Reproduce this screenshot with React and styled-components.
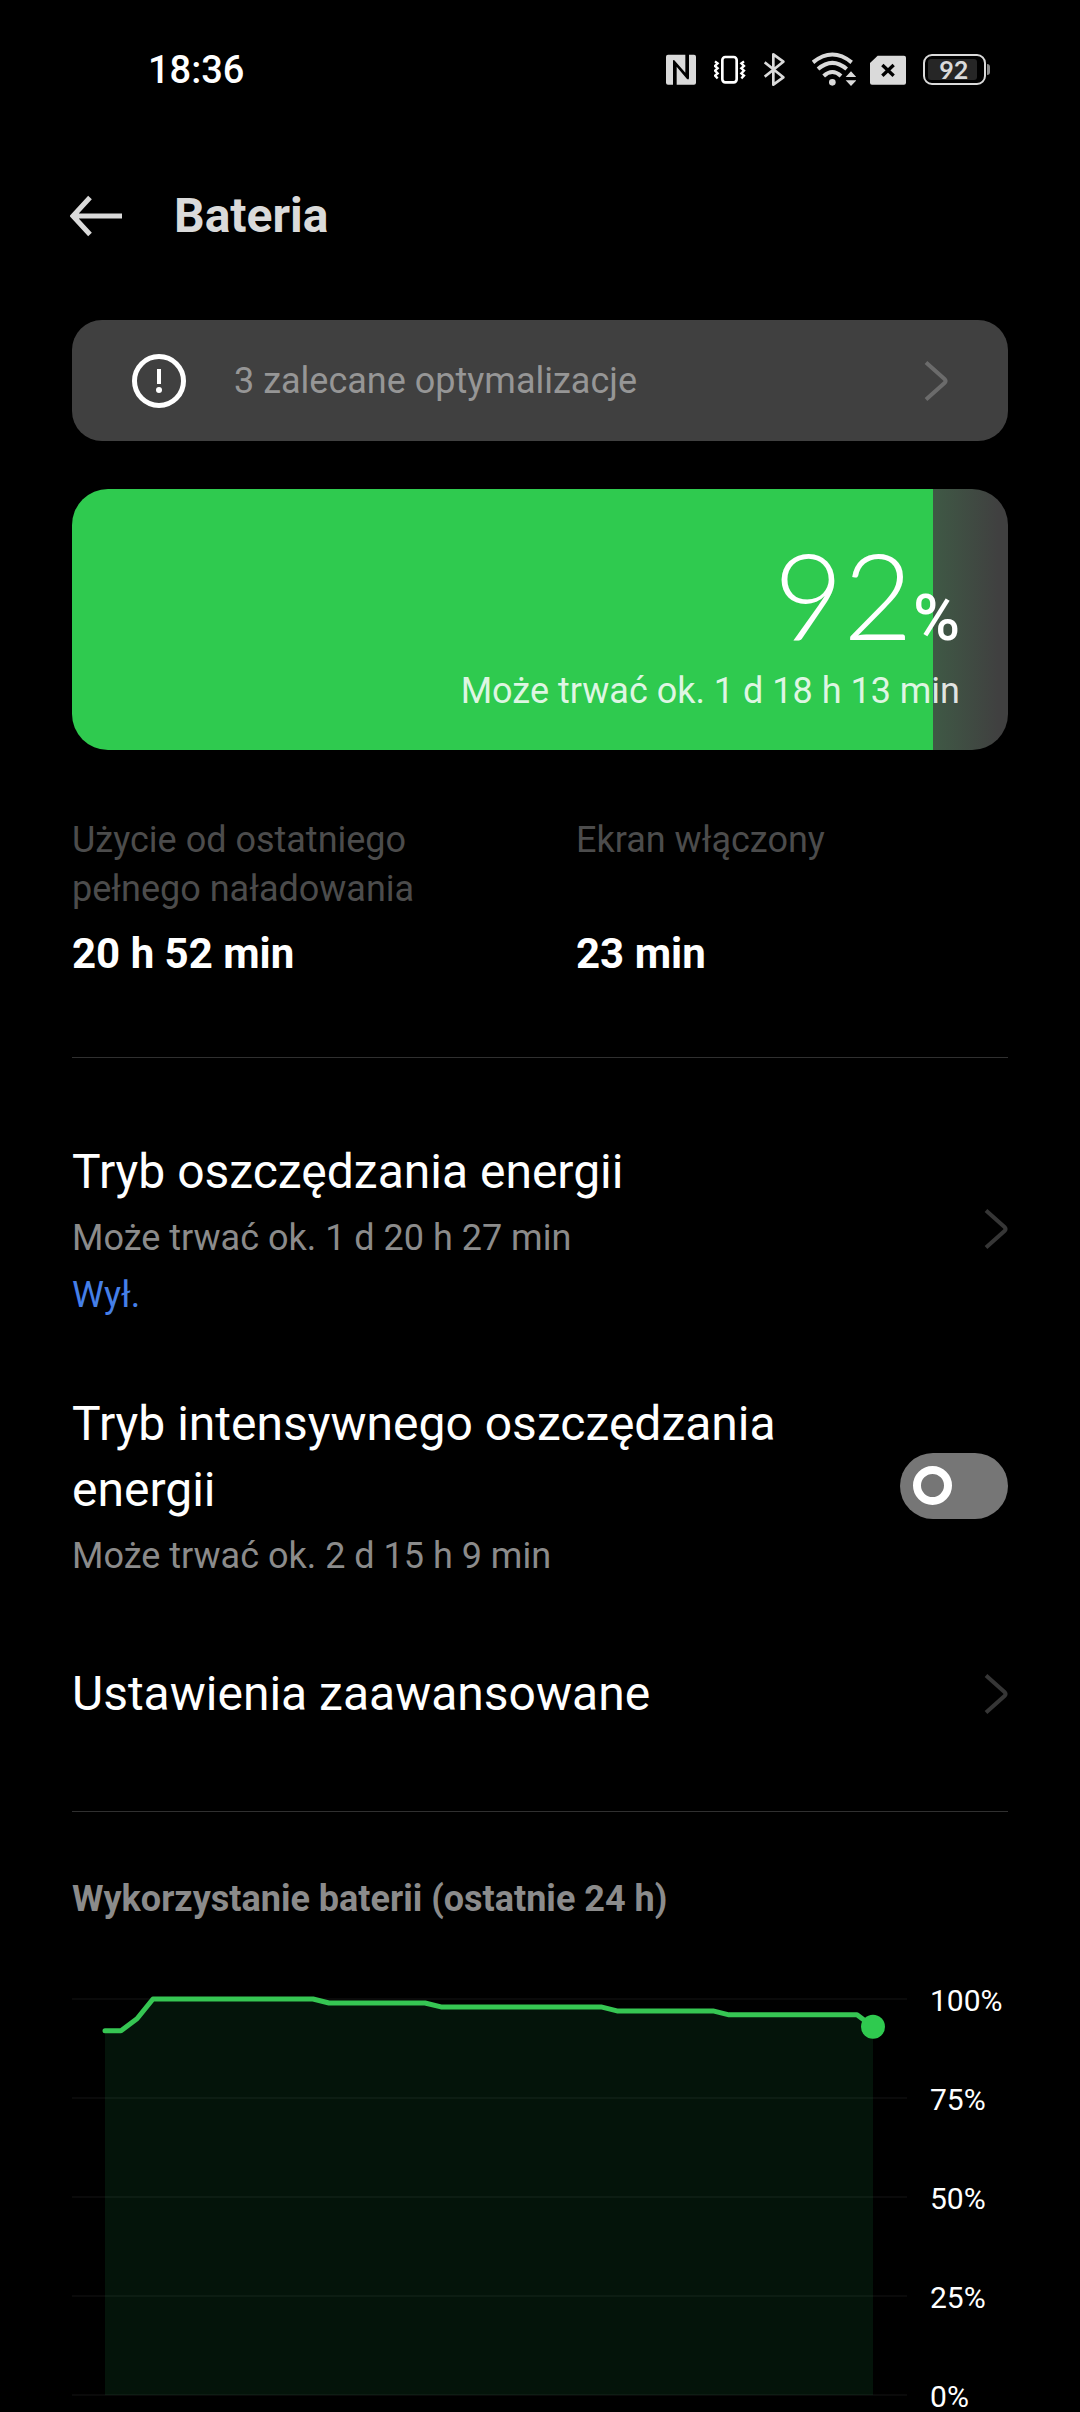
import React, { useState } from 'react'
import styled, { createGlobalStyle } from 'styled-components'

const colors = {
  black: '#000000',
  white: '#ffffff',
  light: '#dadada',
  grey: '#8b8b8b',
  dim: '#4c4c4c',
  card: '#404040',
  green: '#2fca4f',
  blue: '#457fe8',
}

const level = 92

// battery level every half hour, oldest first
const history = [
  92, 92, 95,
  ...Array(11).fill(100),
  ...Array(7).fill(99),
  ...Array(11).fill(98),
  ...Array(7).fill(97),
  ...Array(9).fill(96),
  93,
]

const scale = [100, 75, 50, 25, 0]

const Chevron = () => (
  <ChevronIcon viewBox="0 0 24 42" aria-hidden="true">
    <path d="M2 2.5 L20.5 19 Q22.5 21 20.5 23 L2 39.5" />
  </ChevronIcon>
)

const StatusIcons = () => (
  <Icons>
    <svg width="34" height="40" viewBox="78 58 102 120" aria-label="NFC">
      <path fill={colors.light} d="M84 72 H136 V126 L103 89 Q99 86 99 92 V162 H84 Q78 162 78 156 V78 Q78 72 84 72Z M147 72 H162 Q168 72 168 78 V156 Q168 162 162 162 H110 V108 L141 145 Q147 149 147 141Z" />
    </svg>
    <svg width="36" height="40" viewBox="222 58 108 120" aria-label="Wibracje">
      <rect x="247" y="79" width="43" height="76" rx="9" fill="none" stroke={colors.white} strokeWidth="8" />
      <path
        fill="none"
        stroke={colors.white}
        strokeWidth="7"
        d="M225 92 L233 98 L225 106 L233 113 L225 120 L233 128 L225 135 L233 143 M312 92 L304 98 L312 106 L304 113 L312 120 L304 128 L312 135 L304 143"
      />
    </svg>
    <svg width="34" height="40" viewBox="372 58 102 120" aria-label="Bluetooth">
      <path fill="none" stroke={colors.light} strokeWidth="8" strokeLinejoin="round" d="M374 95 L430 140 L400 162 V71 L430 93 L374 138" />
    </svg>
    <svg width="44" height="40" viewBox="516 58 132 120" aria-label="Wi-Fi">
      <g fill="none" stroke={colors.light} strokeWidth="12">
        <path d="M519 95 Q577 48 635 95" />
        <path d="M534 115 Q577 78 620 115" />
        <path d="M551 136 Q577 112 603 136" />
      </g>
      <circle cx="577" cy="155" r="10" fill={colors.light} />
      <path fill={colors.light} d="M617 139 L633 122 L649 139Z M617 149 L633 166 L649 149Z" />
    </svg>
    <svg width="39" height="40" viewBox="690 58 117 120" aria-label="Brak karty SIM">
      <path fill={colors.light} d="M713 75 H792 Q798 75 798 81 V156 Q798 162 792 162 H696 Q690 162 690 156 V97Z" />
      <path stroke={colors.black} strokeWidth="10" d="M727 103 L761 135 M761 103 L727 135" />
    </svg>
    <Battery>
      <BatteryBody>
        <BatteryLevel>{level}</BatteryLevel>
      </BatteryBody>
      <BatteryTip />
    </Battery>
  </Icons>
)

const Chart = () => {
  const top = 13
  const bottom = 409
  const left = 33
  const step = 16
  const y = value => bottom - (value / 100) * (bottom - top)
  const points = history.map((value, i) => `${left + i * step},${y(value)}`).join(' ')
  const right = left + (history.length - 1) * step

  return (
    <ChartRow>
      <Plot viewBox="0 0 836 426" role="img" aria-label="Poziom baterii">
        <polygon points={`${left},${bottom} ${points} ${right},${bottom}`} fill="#04140a" />
        {scale.map(value => (
          <line key={value} x1="0" x2="835" y1={y(value)} y2={y(value)} stroke={colors.white} strokeOpacity="0.04" strokeWidth="2" />
        ))}
        <polyline points={points} fill="none" stroke="#36c653" strokeWidth="5" strokeLinecap="round" strokeLinejoin="round" />
        <circle cx={right} cy={y(history[history.length - 1])} r="12" fill={colors.green} />
      </Plot>
      <Scale>
        {scale.map(value => (
          <span key={value}>{value}%</span>
        ))}
      </Scale>
    </ChartRow>
  )
}

const App = () => {
  const [intense, setIntense] = useState(false)

  return (
    <>
      <GlobalStyle />
      <StatusBar>
        <Time>18:36</Time>
        <StatusIcons />
      </StatusBar>

      <Header>
        <BackButton aria-label="Wstecz">
          <svg width="52" height="42" viewBox="0 0 52 42">
            <path d="M20 2.5 L3 21 L20 39.5 M3 21 H52" fill="none" stroke={colors.light} strokeWidth="5" />
          </svg>
        </BackButton>
        <PageTitle>Bateria</PageTitle>
      </Header>

      <Main>
        <Tip>
          <svg width="54" height="54" viewBox="0 0 54 54" aria-hidden="true">
            <circle cx="27" cy="27" r="24.5" fill="none" stroke={colors.white} strokeWidth="5" />
            <path d="M27 15 V30" stroke={colors.white} strokeWidth="4" />
            <circle cx="27" cy="36" r="3" fill={colors.white} />
          </svg>
          <TipText>3 zalecane optymalizacje</TipText>
          <Chevron />
        </Tip>

        <LevelCard $level={level}>
          <Level>
            {level}
            <Percent>%</Percent>
          </Level>
          <LevelText>Może trwać ok. 1 d 18 h 13 min</LevelText>
        </LevelCard>

        <Stats>
          <Stat>
            <StatLabel>Użycie od ostatniego pełnego naładowania</StatLabel>
            <StatValue>20 h 52 min</StatValue>
          </Stat>
          <Stat>
            <StatLabel>Ekran włączony</StatLabel>
            <StatValue>23 min</StatValue>
          </Stat>
        </Stats>

        <Divider />

        <List>
          <Row as="a" href="#saver">
            <RowBody>
              <RowTitle>Tryb oszczędzania energii</RowTitle>
              <RowText>Może trwać ok. 1 d 20 h 27 min</RowText>
              <RowText $color={colors.blue}>Wył.</RowText>
            </RowBody>
            <Chevron />
          </Row>
          <Row as="label" htmlFor="intense">
            <RowBody>
              <RowTitle>Tryb intensywnego oszczędzania energii</RowTitle>
              <RowText>Może trwać ok. 2 d 15 h 9 min</RowText>
            </RowBody>
            <Toggle id="intense" type="checkbox" role="switch" checked={intense} onChange={e => setIntense(e.target.checked)} />
          </Row>
          <Row as="a" href="#advanced">
            <RowBody>
              <RowTitle>Ustawienia zaawansowane</RowTitle>
            </RowBody>
            <Chevron />
          </Row>
        </List>

        <Divider />

        <ChartTitle>Wykorzystanie baterii (ostatnie 24 h)</ChartTitle>
        <Chart />
      </Main>
    </>
  )
}

export default App

const GlobalStyle = createGlobalStyle`
  *,
  *::before {
    box-sizing: border-box;
  }

  body {
    margin: 0;
    background: ${colors.black};
    color: ${colors.white};
    font-family: Roboto, "Liberation Sans", sans-serif;
    font-size: 36px;
    line-height: 48px;
  }

  h1, h2, p, dl, dt, dd {
    margin: 0;
  }

  button {
    border: 0;
    padding: 0;
    font: inherit;
    color: inherit;
    text-align: left;
    background: none;
  }

  svg {
    display: block;
    flex-shrink: 0;
  }
`

const StatusBar = styled.div`
  display: flex;
  align-items: center;
  justify-content: space-between;
  height: 139px;
  padding: 0 90px 0 148px;
`

const Time = styled.span`
  font-size: 38px;
  font-weight: 500;
`

const Icons = styled.div`
  display: flex;
  align-items: center;
  gap: 14px;
`

const Battery = styled.div`
  display: flex;
  align-items: center;
  gap: 1px;
`

const BatteryBody = styled.div`
  width: 63px;
  height: 31px;
  padding: 3px;
  border: 2px solid ${colors.light};
  border-radius: 9px;
`

const BatteryLevel = styled.div`
  height: 21px;
  width: 92%;
  padding-left: 3px;
  border-radius: 3px;
  background: #262626;
  color: ${colors.light};
  font-family: Lato, sans-serif;
  font-size: 25px;
  font-weight: 700;
  line-height: 21px;
  text-align: center;
`

const BatteryTip = styled.div`
  width: 3px;
  height: 11px;
  border-radius: 0 3px 3px 0;
  background: ${colors.grey};
`

const Header = styled.header`
  display: flex;
  align-items: center;
  gap: 52px;
  height: 154px;
  padding: 0 70px;
`

const BackButton = styled.button`
  display: block;
`

const PageTitle = styled.h1`
  color: ${colors.light};
  font-size: 48px;
  font-weight: 700;
  line-height: 66px;
`

const Main = styled.main`
  padding: 27px 72px 0;
`

const ChevronIcon = styled.svg`
  width: 24px;
  height: 42px;
  fill: none;
  stroke: #363636;
  stroke-width: 4;
`

const Tip = styled.button`
  display: flex;
  align-items: center;
  gap: 48px;
  width: 100%;
  height: 121px;
  padding: 0 60px;
  border-radius: 30px;
  background: ${colors.card};

  ${ChevronIcon} {
    stroke: #6b6b6b;
  }
`

const TipText = styled.span`
  flex: 1;
  color: #969696;
`

const LevelCard = styled.section`
  display: flex;
  flex-direction: column;
  align-items: flex-end;
  gap: 13px;
  margin-top: 48px;
  padding: 45px 48px 35px;
  border-radius: 36px;
  background: linear-gradient(
    90deg,
    ${colors.green} ${props => props.$level}%,
    #3f5945 ${props => props.$level}%,
    ${colors.card} 99%
  );
`

const Level = styled.p`
  display: flex;
  align-items: baseline;
  font-family: Lato, sans-serif;
  font-size: 120px;
  font-weight: 300;
  line-height: 120px;
`

const Percent = styled.span`
  font-family: Roboto, sans-serif;
  font-size: 64px;
  font-weight: 500;
  line-height: 64px;
`

const LevelText = styled.p`
  color: rgba(255, 255, 255, 0.85);
`

const Stats = styled.dl`
  display: grid;
  grid-template-columns: 1fr 1fr;
  column-gap: 72px;
  padding: 66px 0 79px;
`

const Stat = styled.div`
  display: flex;
  flex-direction: column;
  justify-content: space-between;
  gap: 16px;
`

const StatLabel = styled.dt`
  color: ${colors.dim};
  line-height: 49px;
`

const StatValue = styled.dd`
  font-size: 42px;
  font-weight: 700;
`

const Divider = styled.hr`
  height: 1px;
  margin: 0;
  border: 0;
  background: #303030;
`

const List = styled.div`
  display: flex;
  flex-direction: column;
  padding: 45px 0 39px;
`

const Row = styled.div`
  display: flex;
  align-items: center;
  gap: 72px;
  min-height: 156px;
  padding: 36px 0;
  color: inherit;
  text-decoration: none;
`

const RowBody = styled.div`
  display: flex;
  flex: 1;
  flex-direction: column;
  gap: 9px;
`

const RowTitle = styled.span`
  font-size: 48px;
  line-height: 66px;
`

const RowText = styled.span`
  color: ${props => props.$color || colors.grey};
`

const Toggle = styled.input`
  appearance: none;
  flex-shrink: 0;
  display: flex;
  align-items: center;
  width: 108px;
  height: 66px;
  margin: 0;
  padding: 0 13px;
  border-radius: 33px;
  background: #767676;

  &::before {
    content: '';
    width: 39px;
    height: 39px;
    border: 8px solid ${colors.white};
    border-radius: 50%;
  }

  &:checked {
    justify-content: flex-end;
    background: ${colors.green};
  }
`

const ChartTitle = styled.h2`
  padding: 63px 0;
  color: ${colors.grey};
  font-size: 36px;
  font-weight: 700;
  line-height: 48px;
`

const ChartRow = styled.div`
  display: flex;
  gap: 22px;
`

const Plot = styled.svg`
  flex: 1;
  min-width: 0;
`

const Scale = styled.div`
  display: flex;
  flex-direction: column;
  justify-content: space-between;
  width: 78px;
  font-size: 30px;
  line-height: 30px;
`
